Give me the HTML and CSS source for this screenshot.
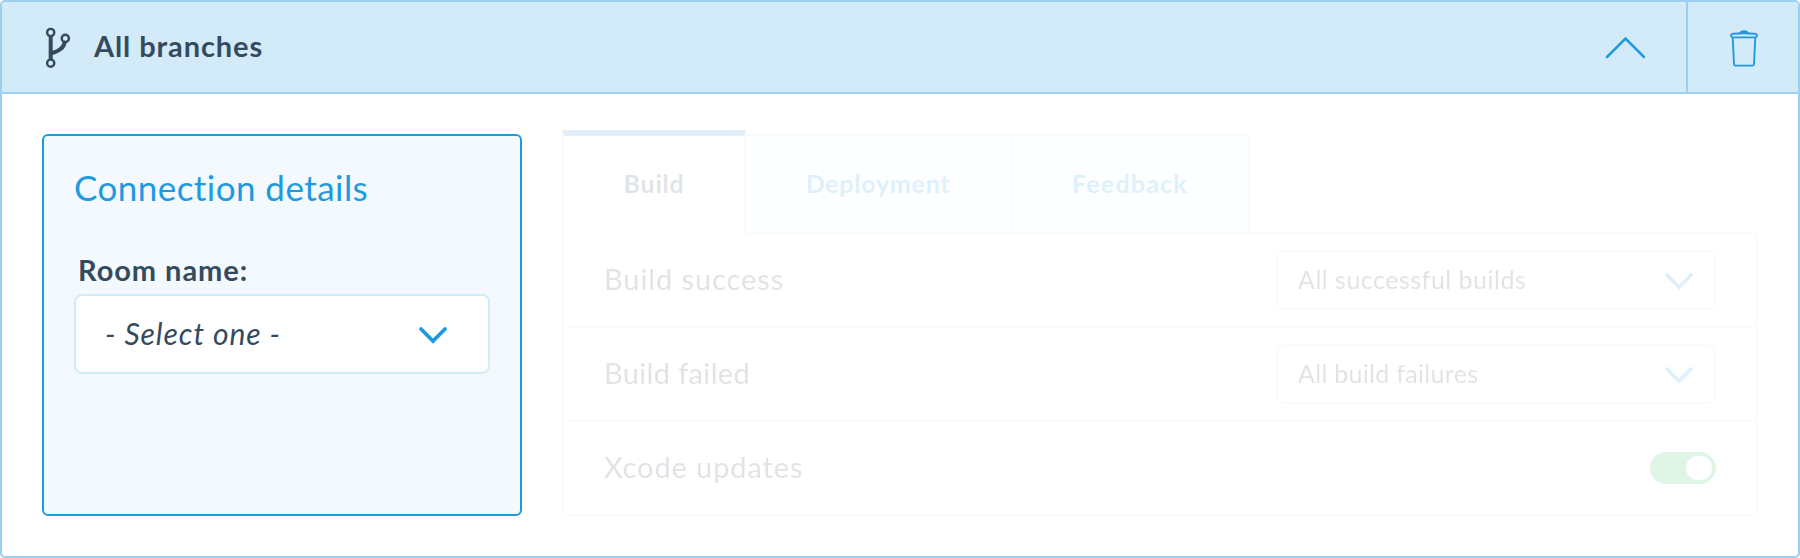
FILE: index.html
```html
<!DOCTYPE html>
<html lang="en">
<head>
<meta charset="utf-8">
<title>All branches</title>
<link rel="stylesheet" href="styles.css">
</head>
<body>
<section class="panel">
  <header class="panel-header">
    <svg class="branch-icon" width="26" height="42" viewBox="0 0 26 42" fill="none" stroke="#344a5f">
      <circle cx="5.700" cy="5.500" r="3.600" stroke-width="2.400"/>
      <circle cx="20.300" cy="11.400" r="3.600" stroke-width="2.400"/>
      <circle cx="5.700" cy="36.200" r="3.600" stroke-width="2.400"/>
      <path d="M5.700 9v23.500M6 26.500C14 23.500 18.500 21.500 19.800 15" stroke-width="4"/>
    </svg>
    <h1 class="panel-title">All branches</h1>
    <button class="collapse" aria-label="Collapse">
      <svg width="40" height="22" viewBox="0 0 40 22" fill="none" stroke="#1f99e0" stroke-width="2.500" stroke-linecap="round"><path d="M2 20 20.500 1.500 39 20"/></svg>
    </button>
    <button class="remove" aria-label="Delete">
      <svg width="28" height="38" viewBox="0 0 28 38" fill="none" stroke="#1f99e0" stroke-width="1.900" stroke-linejoin="round">
        <path d="M9 4.500C10 .300 18 .300 19 4.500Z" fill="#1f99e0" stroke="none"/>
        <path d="M2.500 4.800Q14 3.600 25.500 4.800Q27.300 5.300 26.800 7Q26.500 8.400 25 8.400H3Q1.500 8.400 1.200 7Q.700 5.300 2.500 4.800Z"/>
        <path d="M2.700 8.400 4 35Q4.100 36.600 5.500 36.600H22.500Q23.900 36.600 24 35L25.300 8.400"/>
      </svg>
    </button>
  </header>
  <div class="panel-body">
    <div class="connection">
      <h2 class="connection-title">Connection details</h2>
      <label class="field-label">Room name:</label>
      <div class="select select-lg">
        <span>- Select one -</span>
        <svg class="chevron" width="30" height="18" viewBox="0 0 30 18"><path d="M3 3 15 15 27 3"/></svg>
      </div>
    </div>
    <div class="notifications">
      <nav class="tabs">
        <div class="tab tab-active">Build</div>
        <div class="tab tab-deploy">Deployment</div>
        <div class="tab tab-feedback">Feedback</div>
      </nav>
      <div class="rows">
        <div class="row">
          <span class="row-name">Build success</span>
          <div class="select select-sm"><span>All successful builds</span>
            <svg class="chevron" width="30" height="18" viewBox="0 0 30 18"><path d="M3 3 15 15 27 3"/></svg></div>
        </div>
        <div class="row">
          <span class="row-name row-name-failed">Build failed</span>
          <div class="select select-sm select-failed"><span>All build failures</span>
            <svg class="chevron" width="30" height="18" viewBox="0 0 30 18"><path d="M3 3 15 15 27 3"/></svg></div>
        </div>
        <div class="row">
          <span class="row-name">Xcode updates</span>
          <div class="toggle"><div class="knob"></div></div>
        </div>
      </div>
    </div>
  </div>
</section>
</body>
</html>
```
FILE: styles.css
```css
* { box-sizing: border-box; }
body { margin: 0; font-family: Lato, "Open Sans", sans-serif; font-variant-ligatures: none; color: #344a5f; background: #fff; }
h1, h2 { margin: 0; }
.panel { width: 1800px; height: 558px; border: 2px solid #9bd0ef; border-radius: 5px; display: flex; flex-direction: column; overflow: hidden; }
.panel-header { height: 92px; flex: none; display: flex; align-items: stretch; background: #d3eaf8; border-bottom: 2px solid #9bd0ef; }
.branch-icon { flex: none; margin: 25px 0 0 43px; }
.panel-title { flex: 1; margin-left: 23px; font-size: 29px; line-height: 88px; font-weight: 700; letter-spacing: .9px; }
.collapse, .remove { border: 0; background: none; padding: 0; display: flex; }
.collapse { width: 80px; margin-right: 1px; padding-top: 35px; }
.remove { width: 112px; border-left: 2px solid #9bd0ef; padding: 27px 0 0 42px; }
.panel-body { flex: 1; display: flex; gap: 40px; padding: 40px; }
.connection { width: 480px; height: 382px; border: 2px solid #1f99e0; border-radius: 6px; background: #f3f9fd; padding: 29px 30px 0; }
.connection-title { font-size: 35px; line-height: 44px; font-weight: 400; letter-spacing: .45px; color: #1f99e0; }
.field-label { display: block; margin: 43px 0 6px 4px; font-size: 29px; line-height: 36px; font-weight: 700; letter-spacing: .95px; }
.select { display: flex; align-items: center; justify-content: space-between; border: 2px solid #d3eaf8; border-radius: 8px; background: #fff; white-space: nowrap; }
.select-lg { height: 80px; width: 416px; padding: 0 40px 0 29px; font-size: 30px; font-style: italic; letter-spacing: .95px; }
.select-lg span { padding-bottom: 3px; }
.select-sm { height: 60px; width: 440px; padding: 0 20px; font-size: 25px; letter-spacing: .5px; }
.select-sm span { padding-bottom: 3px; }
.select-failed { letter-spacing: .3px; }
.chevron { flex: none; margin-top: 2px; fill: none; stroke: #1f99e0; stroke-width: 3.8px; stroke-linecap: round; }
.notifications { flex: 1; height: 386px; margin-top: -4px; opacity: .15; }
.notifications .select { border-color: #d0e9ff; }
.tabs { display: flex; height: 104px; margin-bottom: -2px; position: relative; font-size: 25px; font-weight: 700; letter-spacing: .75px; }
.tab { display: flex; align-items: center; justify-content: center; padding-bottom: 3px; }
.tab-active { width: 184px; height: 106px; border: solid #d0e9ff; border-width: 0 2px; border-top: 6px solid #3a8cd8; background: #fff; padding-bottom: 7px; }
.tab-deploy, .tab-feedback { height: 100px; margin: 4px 0 0 -2px; border: 2px solid #d0e9ff; background: #f1f9ff; color: #1f99e0; }
.tab-deploy { width: 268px; }
.tab-feedback { width: 240px; letter-spacing: 1.2px; }
.rows { border: 2px solid #d0e9ff; }
.row { height: 94px; display: flex; align-items: center; justify-content: space-between; padding: 0 40px; border-bottom: 2px solid #d0e9ff; font-size: 29px; letter-spacing: .9px; }
.row-name { padding-bottom: 3px; }
.row-name-failed { letter-spacing: .35px; }
.row:last-child { height: 92px; border-bottom: 0; }
.toggle { width: 66px; height: 32px; border-radius: 16px; background: #30b850; padding: 4px; display: flex; justify-content: flex-end; }
.knob { width: 26px; height: 24px; border-radius: 12px; background: #fff; }
```
